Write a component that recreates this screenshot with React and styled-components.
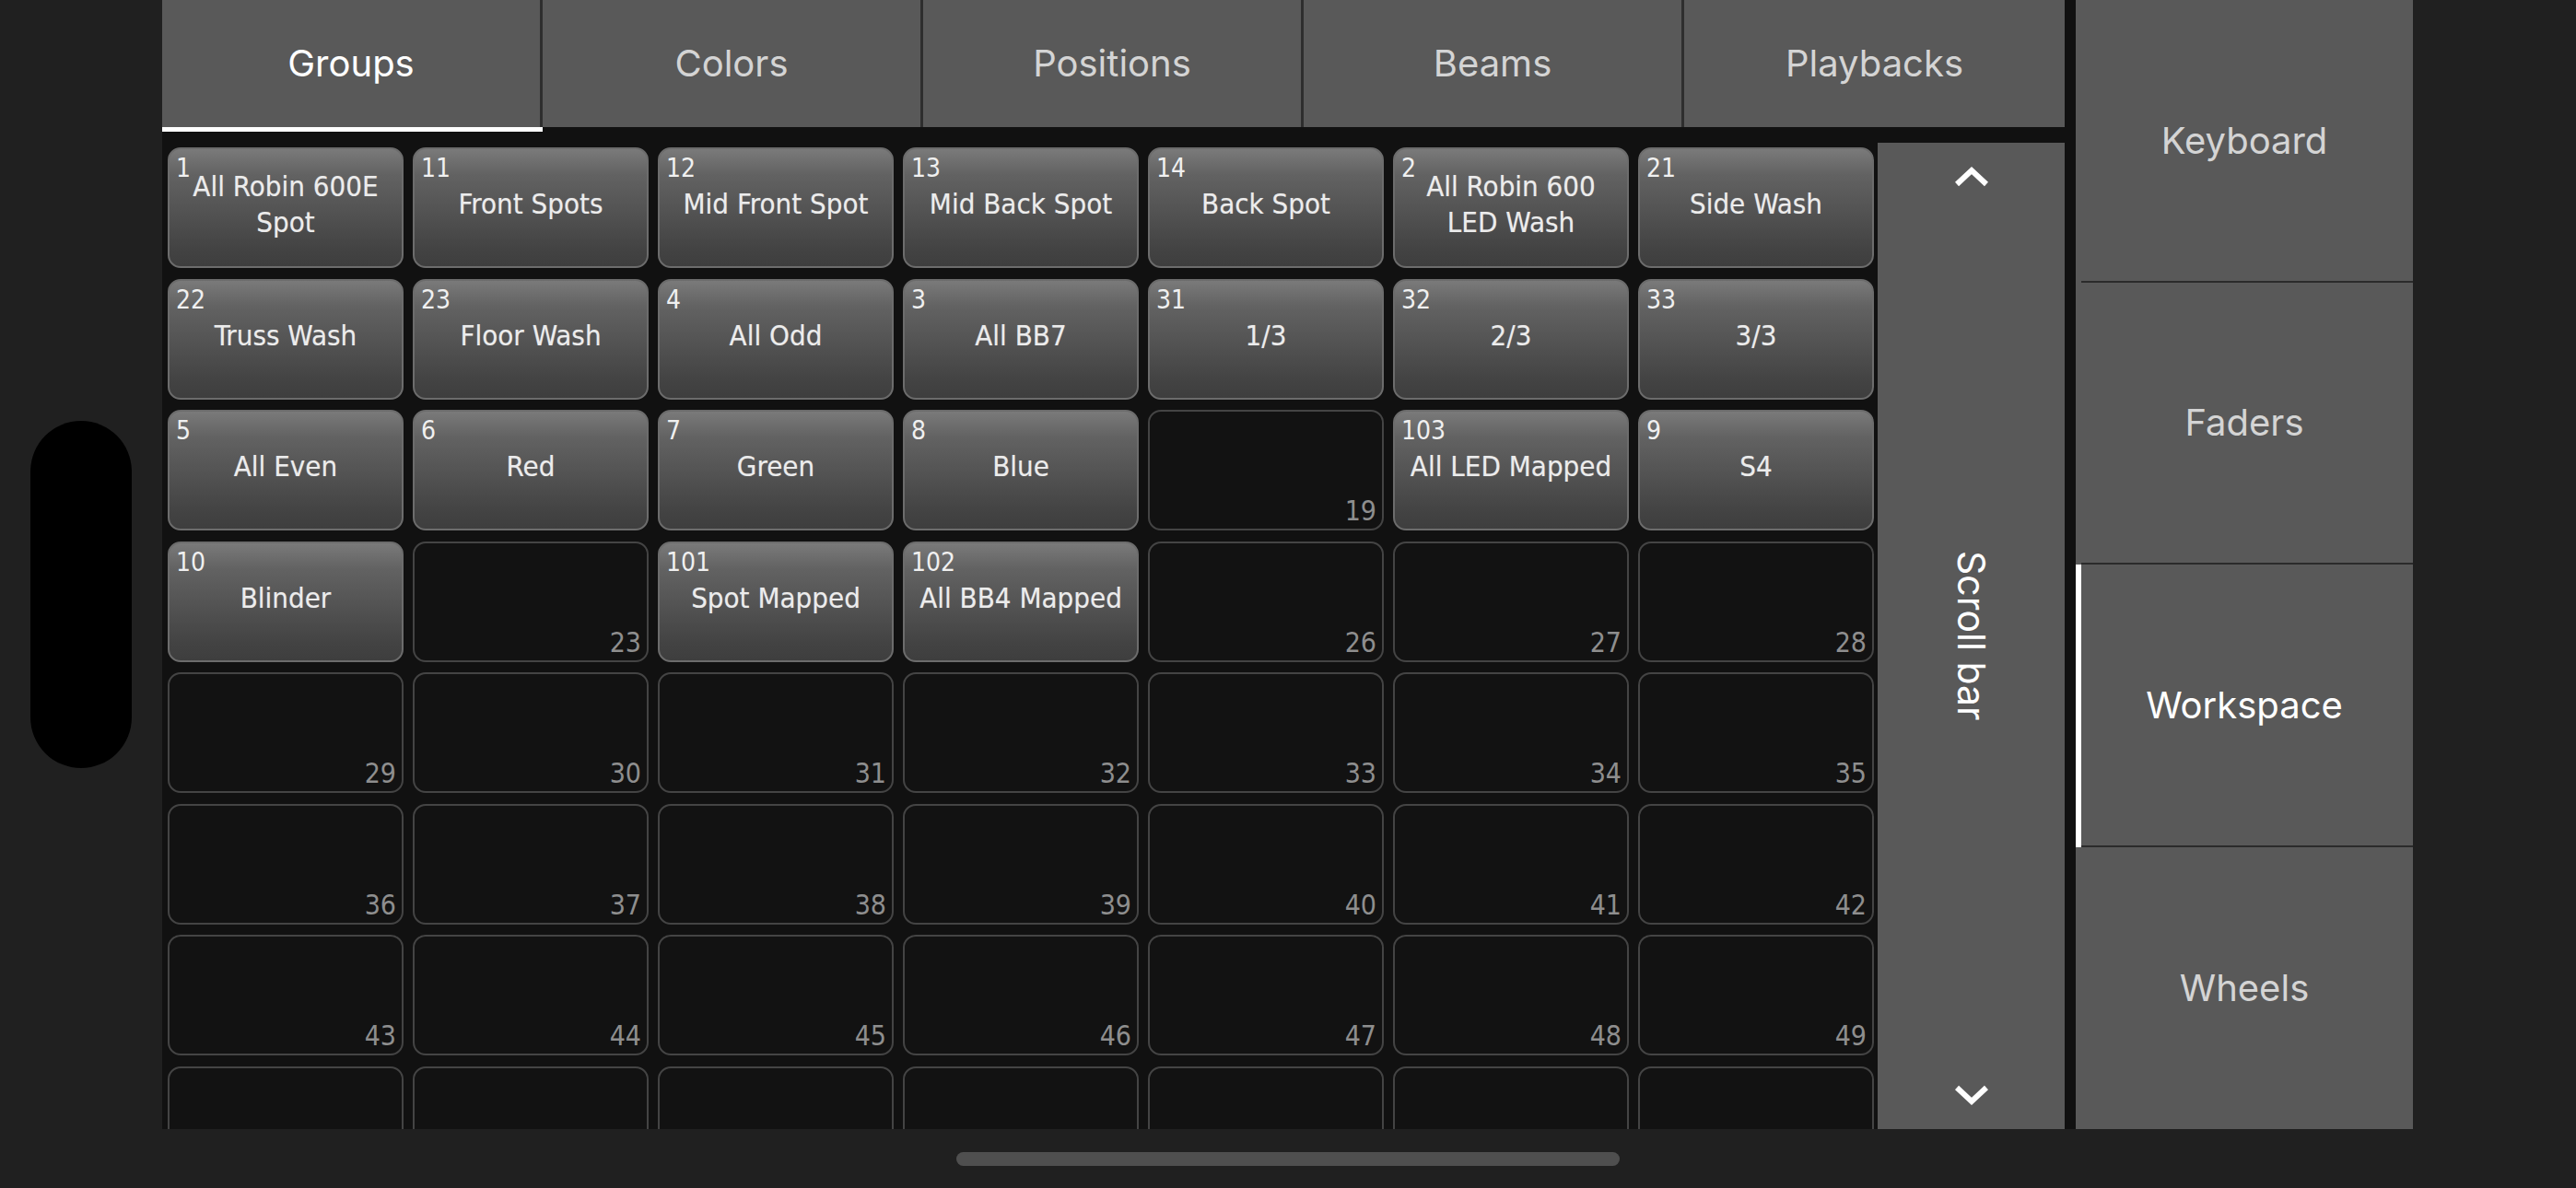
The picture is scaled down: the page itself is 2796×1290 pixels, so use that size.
import React from "react";
import styled, { createGlobalStyle } from "styled-components";

const GlobalStyle = createGlobalStyle`
  html, body {
    margin: 0;
    padding: 0;
    background: #202020;
  }
  #root {
    width: 2796px;
    height: 1290px;
    overflow: hidden;
  }
`;

const Screen = styled.div`
  display: flex;
  width: 2796px;
  height: 1290px;
  background: #202020;
  font-family: Inter, "Noto Sans", sans-serif;
`;

const SideGutter = styled.div`
  width: ${(p) => p.width}px;
  flex-shrink: 0;
  display: flex;
  align-items: center;
  justify-content: center;
`;

const Island = styled.div`
  width: 110px;
  height: 377px;
  border-radius: 55px;
  background: #000;
`;

const Center = styled.div`
  flex: 1;
  display: flex;
  flex-direction: column;
`;

const Workspace = styled.div`
  height: 1226px;
  display: flex;
  background: #111;
`;

const MainPanel = styled.div`
  width: 2065px;
  display: flex;
  flex-direction: column;
  background: #111;
`;

const TabBar = styled.div`
  display: flex;
  height: 143px;
`;

const Tab = styled.div`
  flex: 1;
  display: flex;
  flex-direction: column;
`;

const TabFace = styled.div`
  height: 138px;
  display: flex;
  align-items: center;
  justify-content: center;
  background: #595959;
  border-right: ${(p) => (p.last ? "none" : "3px solid #2e2e2e")};
  color: ${(p) => (p.active ? "#ffffff" : "#d4d4d4")};
  font-size: 40px;
  padding-bottom: 2px;
`;

const TabLine = styled.div`
  height: 5px;
  background: ${(p) => (p.active ? "#ffffff" : "#111")};
`;

const Body = styled.div`
  flex: 1;
  display: flex;
  min-height: 0;
`;

const GridArea = styled.div`
  flex: 1;
  padding: 17px 0 0 6px;
  overflow: hidden;
`;

const Grid = styled.div`
  display: grid;
  grid-template-columns: repeat(7, 256px);
  grid-auto-rows: 131px;
  column-gap: 10px;
  row-gap: 11.5px;
`;

const Cell = styled.div`
  position: relative;
  box-sizing: border-box;
  display: flex;
  align-items: center;
  justify-content: center;
  padding-bottom: 8px;
  border-radius: 14px;
  border: 2px solid ${(p) => (p.filled ? "#6c6c6c" : "#444")};
  background: ${(p) =>
    p.filled
      ? "linear-gradient(to bottom, #7a7a7a 0%, #626262 22%, #525252 55%, #434343 85%, #3e3e3e 100%)"
      : "#121212"};
  font-family: "DejaVu Sans Condensed", "DejaVu Sans", sans-serif;
  font-stretch: condensed;
`;

const Label = styled.div`
  color: #ececec;
  font-size: 31px;
  line-height: 38.5px;
  text-align: center;
  white-space: pre;
  text-shadow: 0 0 1px rgba(255, 255, 255, 0.35);
`;

const GroupNumber = styled.span`
  position: absolute;
  left: 7px;
  top: 7px;
  font-size: 28px;
  line-height: 28px;
  color: #f0f0f0;
`;

const SlotNumber = styled.span`
  position: absolute;
  right: 6px;
  bottom: 4px;
  font-size: 30px;
  line-height: 30px;
  color: #8e8e8e;
`;

const ScrollBar = styled.div`
  width: 203px;
  margin: 12px 0 0 4px;
  background: #595959;
  display: flex;
  flex-direction: column;
  align-items: center;
  justify-content: space-between;
  padding: 25px 0;
  box-sizing: border-box;
`;

const ScrollLabel = styled.div`
  writing-mode: vertical-rl;
  color: #ffffff;
  font-size: 41px;
`;

const Divider = styled.div`
  width: 12px;
  background: #111;
`;

const SideMenu = styled.div`
  width: 366px;
  display: flex;
  flex-direction: column;
  background: #595959;
`;

const MenuItem = styled.div`
  flex: 1;
  display: flex;
`;

const Indicator = styled.div`
  width: 6px;
  background: ${(p) => (p.active ? "#ffffff" : "transparent")};
`;

const MenuFace = styled.div`
  flex: 1;
  display: flex;
  align-items: center;
  justify-content: center;
  border-bottom: ${(p) => (p.last ? "none" : "2px solid #2b2b2b")};
  color: ${(p) => (p.active ? "#ffffff" : "#d4d4d4")};
  font-size: 40px;
  padding-right: 6px;
`;

const HomeArea = styled.div`
  flex: 1;
  display: flex;
  justify-content: center;
  padding-top: 25px;
`;

const HomeBar = styled.div`
  width: 720px;
  height: 15px;
  border-radius: 8px;
  background: #4f4f4f;
`;

const tabs = ["Groups", "Colors", "Positions", "Beams", "Playbacks"];
const menu = ["Keyboard", "Faders", "Workspace", "Wheels"];

// [number, label]; null label = empty slot
const groups = [
  [1, "All Robin 600E\nSpot"], [11, "Front Spots"], [12, "Mid Front Spot"], [13, "Mid Back Spot"],
  [14, "Back Spot"], [2, "All Robin 600\nLED Wash"], [21, "Side Wash"],
  [22, "Truss Wash"], [23, "Floor Wash"], [4, "All Odd"], [3, "All BB7"],
  [31, "1/3"], [32, "2/3"], [33, "3/3"],
  [5, "All Even"], [6, "Red"], [7, "Green"], [8, "Blue"], [19, null],
  [103, "All LED Mapped"], [9, "S4"],
  [10, "Blinder"], [23, null], [101, "Spot Mapped"], [102, "All BB4 Mapped"],
  [26, null], [27, null], [28, null],
];
for (let n = 29; n <= 49; n++) groups.push([n, null]);
// partially visible last row, numbers fall below the fold
for (let n = 50; n <= 56; n++) groups.push([null, null]);

function Chevron({ down }) {
  return (
    <svg width="36" height="24" viewBox="0 0 36 24">
      <polyline
        points={down ? "2,4 18,19 34,4" : "2,20 18,5 34,20"}
        fill="none"
        stroke="#fff"
        strokeWidth="6"
      />
    </svg>
  );
}

export default function App() {
  return (
    <>
      <GlobalStyle />
      <Screen>
        <SideGutter width={176}>
          <Island />
        </SideGutter>
        <Center>
          <Workspace>
            <MainPanel>
              <TabBar>
                {tabs.map((t, i) => (
                  <Tab key={t}>
                    <TabFace active={i === 0} last={i === tabs.length - 1}>
                      {t}
                    </TabFace>
                    <TabLine active={i === 0} />
                  </Tab>
                ))}
              </TabBar>
              <Body>
                <GridArea>
                  <Grid>
                    {groups.map(([n, label], i) => (
                      <Cell key={i} filled={!!label}>
                        {label ? (
                          <>
                            <GroupNumber>{n}</GroupNumber>
                            <Label>{label}</Label>
                          </>
                        ) : (
                          n !== null && <SlotNumber>{n}</SlotNumber>
                        )}
                      </Cell>
                    ))}
                  </Grid>
                </GridArea>
                <ScrollBar>
                  <Chevron />
                  <ScrollLabel>Scroll bar</ScrollLabel>
                  <Chevron down />
                </ScrollBar>
              </Body>
            </MainPanel>
            <Divider />
            <SideMenu>
              {menu.map((m, i) => (
                <MenuItem key={m}>
                  <Indicator active={m === "Workspace"} />
                  <MenuFace active={m === "Workspace"} last={i === menu.length - 1}>
                    {m}
                  </MenuFace>
                </MenuItem>
              ))}
            </SideMenu>
          </Workspace>
          <HomeArea>
            <HomeBar />
          </HomeArea>
        </Center>
        <SideGutter width={177} />
      </Screen>
    </>
  );
}
